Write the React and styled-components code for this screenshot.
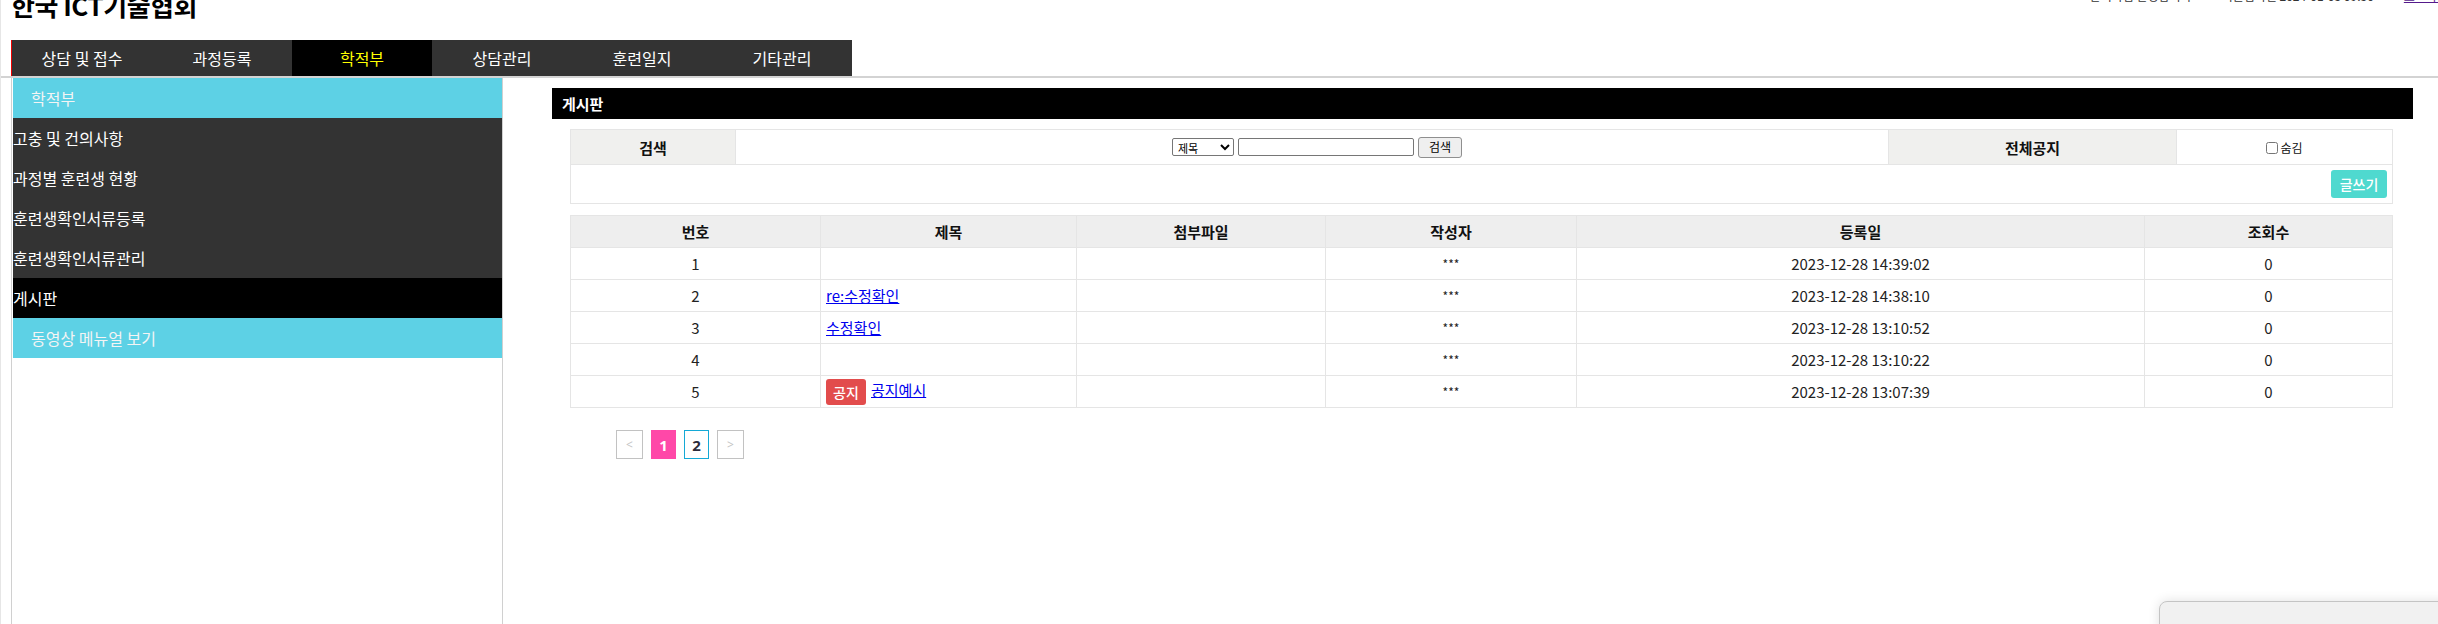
import React from "react"
import styled, { createGlobalStyle } from "styled-components"

const GlobalStyle = createGlobalStyle`
  html, body {
    margin: 0;
    padding: 0;
    background: #fff;
    overflow: hidden;
  }
  body {
    font-family: "Noto Sans CJK KR", "Noto Sans", sans-serif;
    color: #222;
  }
`

const Page = styled.div`
  min-height: 100vh;
  border-left: 1px solid #e6e6e6;
  box-sizing: border-box;
`

const Header = styled.div`
  height: 40px;
  display: flex;
  justify-content: space-between;
  align-items: flex-start;
`

const Title = styled.h1`
  margin: -8px 0 0 10px;
  font-size: 26px;
  line-height: 26px;
  font-weight: 700;
  color: #000;
  letter-spacing: -0.5px;
`

const TopInfo = styled.div`
  display: flex;
  gap: 30px;
  margin-top: -11px;
  font-size: 12px;
  line-height: 14px;
  color: #333;
`

const TopLink = styled.a`
  color: #551a8b;
  text-decoration: underline;
  margin-right: -10px;
`

const NavWrap = styled.div`
  border-bottom: 2px solid #d3d3d3;
  padding-left: 10px;
`

const Nav = styled.ul`
  display: flex;
  list-style: none;
  margin: 0;
  padding: 0;
  width: 840px;
  height: 36px;
  background: #333;
  border-left: 1px solid #e00;
`

const Tab = styled.li`
  width: 140px;
  display: flex;
  align-items: center;
  justify-content: center;
  font-size: 16px;
  color: ${(p) => (p.active ? "#ffff00" : "#fff")};
  background: ${(p) => (p.active ? "#000" : "transparent")};
`

const Body = styled.div`
  display: flex;
  min-height: calc(100vh - 78px);
`

const Sidebar = styled.div`
  width: 490px;
  margin-left: 10px;
  padding-left: 1px;
  border-left: 1px solid #d0d0d0;
  border-right: 1px solid #d0d0d0;
`

const SideItem = styled.div`
  height: 40px;
  display: flex;
  align-items: center;
  font-size: 16px;
  color: ${(p) => (p.kind === "cyan" ? "#f4f4f4" : "#fff")};
  padding-left: ${(p) => (p.kind === "cyan" ? "18px" : "0")};
  background: ${(p) =>
    p.kind === "cyan" ? "#5dd1e5" : p.kind === "active" ? "#000" : "#333"};
`

const Content = styled.div`
  flex: 1;
  padding: 10px 25px 0 49px;
`

const BoardBar = styled.div`
  height: 31px;
  background: #000;
  color: #fff;
  font-size: 15px;
  font-weight: 700;
  display: flex;
  align-items: center;
  padding-left: 10px;
`

const Inner = styled.div`
  padding: 10px 20px 0 18px;
`

const Table = styled.table`
  width: 100%;
  table-layout: fixed;
  border-collapse: collapse;
  font-size: 15px;
  margin-bottom: 11px;

  td, th {
    border: 1px solid #e5e5e5;
    padding: 0;
  }
`

const Row = styled.tr`
  height: ${(p) => p.h || 32}px;
`

const HeadCell = styled.th`
  background: ${(p) => (p.light ? "#f0f0ee" : "#eeeeee")};
  font-size: 15px;
  font-weight: 700;
  color: #111;
  text-align: center;
`

const Cell = styled.td`
  text-align: ${(p) => p.align || "center"};
  padding-left: ${(p) => (p.align === "left" ? "5px" : "0")} !important;
  padding-right: ${(p) => (p.align === "right" ? "5px" : "0")} !important;
  font-size: ${(p) => p.size || 15}px;
  color: #222;
  vertical-align: middle;
`

const SearchBox = styled.div`
  display: inline-flex;
  align-items: center;
  gap: 4px;
  margin-left: 10px;
`

const Select = styled.select`
  width: 62px;
  height: 18px;
  font-size: 11px;
  font-family: inherit;
  padding: 0 1px;
  border: 1px solid #767676;
  border-radius: 2px;
  background: #fff;
`

const Input = styled.input`
  width: 172px;
  height: 14px;
  border: 1px solid #767676;
  border-radius: 2px;
  padding: 1px;
`

const Button = styled.button`
  height: 21px;
  width: 44px;
  font-size: 12px;
  font-family: inherit;
  line-height: 1;
  padding: 0;
  border: 1px solid #8f8f8f;
  border-radius: 3px;
  background: #efefef;
  color: #000;
`

const CheckLabel = styled.label`
  display: inline-flex;
  align-items: center;
  font-size: 12px;
  color: #111;

  input {
    margin: 0 2px 0 0;
    width: 12px;
    height: 12px;
  }
`

const WriteButton = styled.button`
  height: 28px;
  width: 56px;
  border: 0;
  border-radius: 3px;
  background: #4fd9cf;
  color: #fff;
  font-size: 14px;
  font-family: inherit;
  font-weight: 500;
  padding: 0;
`

const Link = styled.a`
  color: #0000ee;
  text-decoration: underline;
  font-size: 15px;
`

const Badge = styled.span`
  display: inline-flex;
  align-items: center;
  justify-content: center;
  width: 40px;
  height: 26px;
  border-radius: 3px;
  background: #e24c4c;
  color: #fff;
  font-size: 14px;
  font-weight: 500;
  margin-right: 5px;
  vertical-align: middle;
`

const Pager = styled.div`
  display: flex;
  gap: 8px;
  margin: 22px 0 0 46px;
`

const PageBtn = styled.span`
  box-sizing: border-box;
  width: ${(p) => (p.arrow ? 27 : 25)}px;
  height: 29px;
  display: flex;
  align-items: center;
  justify-content: center;
  font-size: ${(p) => (p.arrow ? 12 : 15)}px;
  font-weight: ${(p) => (p.arrow ? 400 : 700)};
  font-family: "Open Sans", "Noto Sans", sans-serif;
  color: ${(p) => (p.current ? "#fff" : p.arrow ? "#c4c4c4" : "#2b2b3b")};
  background: ${(p) => (p.current ? "#ff48a8" : "#fff")};
  border: 1px solid
    ${(p) => (p.current ? "#ff48a8" : p.arrow ? "#c2c2c2" : "#14a9d6")};
`

const Widget = styled.div`
  position: fixed;
  left: 2159px;
  top: 601px;
  width: 320px;
  height: 80px;
  background: #f1f1f1;
  border: 1px solid #c4c4c4;
  border-radius: 8px;
  box-shadow: 0 0 12px rgba(0, 0, 0, 0.12);
`

const tabs = ["상담 및 접수", "과정등록", "학적부", "상담관리", "훈련일지", "기타관리"]

const sideMenu = [
  { text: "학적부", kind: "cyan" },
  { text: "고충 및 건의사항" },
  { text: "과정별 훈련생 현황" },
  { text: "훈련생확인서류등록" },
  { text: "훈련생확인서류관리" },
  { text: "게시판", kind: "active" },
  { text: "동영상 메뉴얼 보기", kind: "cyan" },
]

const posts = [
  { no: 1, title: "", date: "2023-12-28 14:39:02" },
  { no: 2, title: "re:수정확인", date: "2023-12-28 14:38:10" },
  { no: 3, title: "수정확인", date: "2023-12-28 13:10:52" },
  { no: 4, title: "", date: "2023-12-28 13:10:22" },
  { no: 5, title: "공지예시", date: "2023-12-28 13:07:39", notice: true },
]

export default function App() {
  return (
    <Page>
      <GlobalStyle />
      <Header>
        <Title>한국 ICT기술협회</Title>
        <TopInfo>
          <span>관리자님 환영합니다</span>
          <span>최근접속일 2024-01-03 09:30</span>
          <TopLink href="#">로그아웃</TopLink>
        </TopInfo>
      </Header>
      <NavWrap>
        <Nav>
          {tabs.map((tab) => (
            <Tab key={tab} active={tab === "학적부"}>
              {tab}
            </Tab>
          ))}
        </Nav>
      </NavWrap>
      <Body>
        <Sidebar>
          {sideMenu.map((item) => (
            <SideItem key={item.text} kind={item.kind}>
              {item.text}
            </SideItem>
          ))}
        </Sidebar>
        <Content>
          <BoardBar>게시판</BoardBar>
          <Inner>
            <Table>
              <colgroup>
                <col style={{ width: 165 }} />
                <col style={{ width: 1153 }} />
                <col style={{ width: 288 }} />
                <col style={{ width: 216 }} />
              </colgroup>
              <tbody>
                <Row h={35}>
                  <HeadCell light>검색</HeadCell>
                  <Cell>
                    <SearchBox>
                      <Select defaultValue="title">
                        <option value="title">제목</option>
                        <option value="writer">작성자</option>
                      </Select>
                      <Input type="text" />
                      <Button>검색</Button>
                    </SearchBox>
                  </Cell>
                  <HeadCell light>전체공지</HeadCell>
                  <Cell>
                    <CheckLabel>
                      <input type="checkbox" />
                      숨김
                    </CheckLabel>
                  </Cell>
                </Row>
                <Row h={39}>
                  <Cell colSpan={4} align="right">
                    <WriteButton>글쓰기</WriteButton>
                  </Cell>
                </Row>
              </tbody>
            </Table>
            <Table>
              <colgroup>
                <col style={{ width: 250 }} />
                <col style={{ width: 256 }} />
                <col style={{ width: 249 }} />
                <col style={{ width: 251 }} />
                <col style={{ width: 568 }} />
                <col style={{ width: 248 }} />
              </colgroup>
              <thead>
                <Row>
                  <HeadCell>번호</HeadCell>
                  <HeadCell>제목</HeadCell>
                  <HeadCell>첨부파일</HeadCell>
                  <HeadCell>작성자</HeadCell>
                  <HeadCell>등록일</HeadCell>
                  <HeadCell>조회수</HeadCell>
                </Row>
              </thead>
              <tbody>
                {posts.map((post) => (
                  <Row key={post.no}>
                    <Cell>{post.no}</Cell>
                    <Cell align="left">
                      {post.notice && <Badge>공지</Badge>}
                      {post.title && <Link href="#">{post.title}</Link>}
                    </Cell>
                    <Cell />
                    <Cell size={12}>***</Cell>
                    <Cell>{post.date}</Cell>
                    <Cell>0</Cell>
                  </Row>
                ))}
              </tbody>
            </Table>
            <Pager>
              <PageBtn arrow>&lt;</PageBtn>
              <PageBtn current>1</PageBtn>
              <PageBtn>2</PageBtn>
              <PageBtn arrow>&gt;</PageBtn>
            </Pager>
          </Inner>
        </Content>
      </Body>
      <Widget />
    </Page>
  )
}
